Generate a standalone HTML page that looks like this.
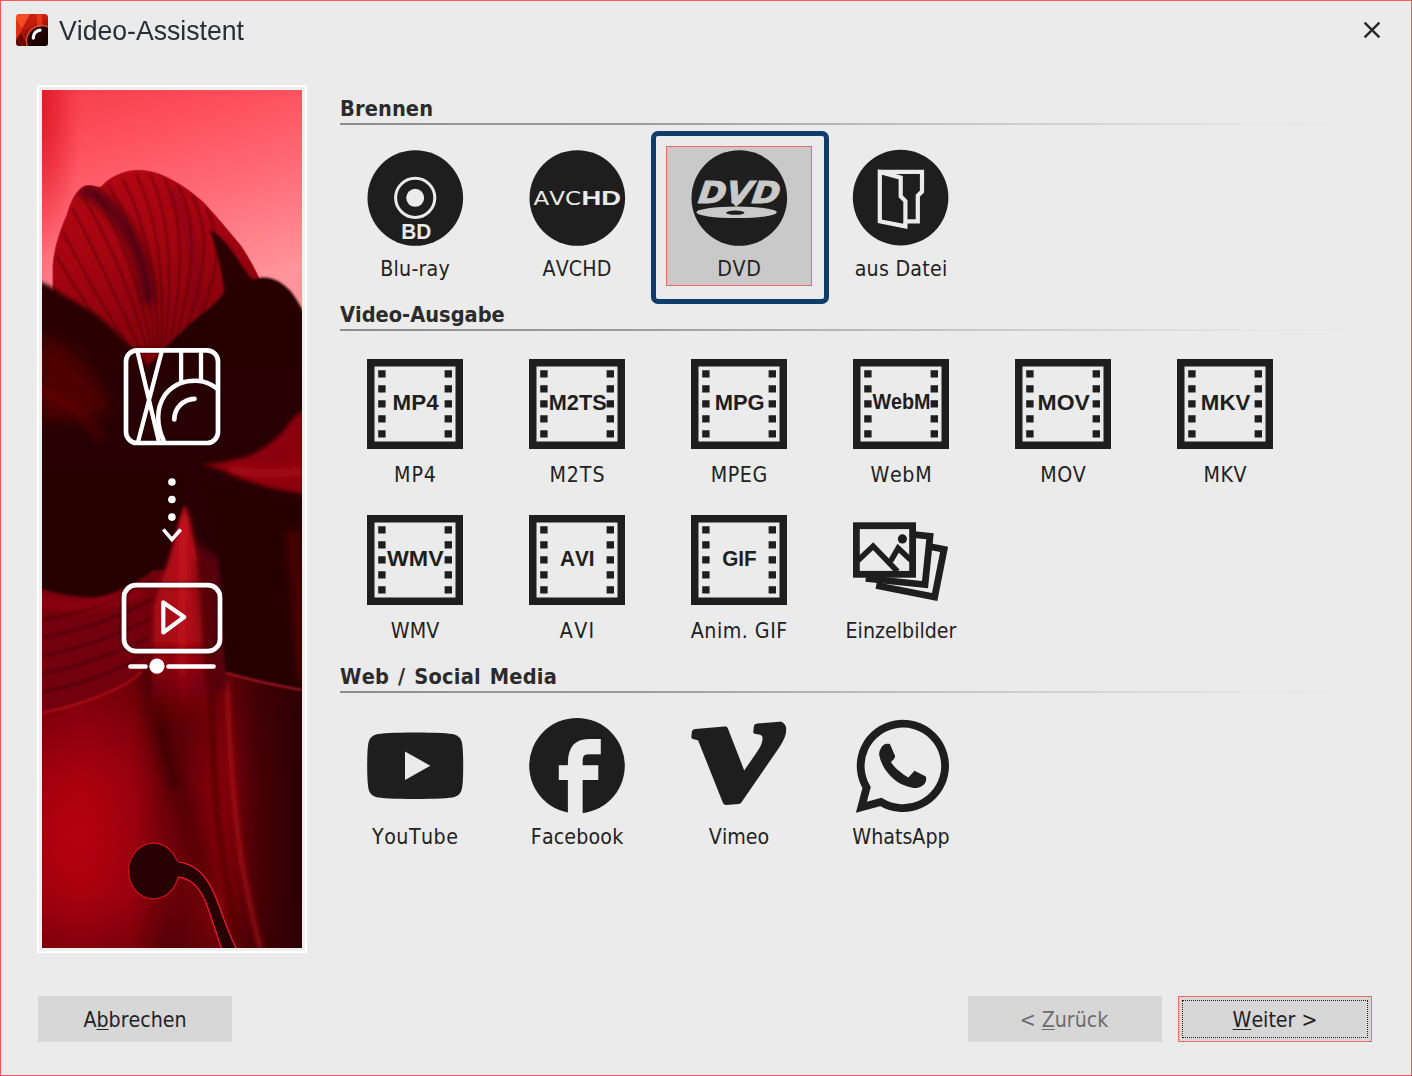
<!DOCTYPE html>
<html lang="de">
<head>
<meta charset="utf-8">
<title>Video-Assistent</title>
<style>
*{box-sizing:border-box;margin:0;padding:0}
html,body{width:1412px;height:1076px;overflow:hidden;background:#ebebeb}
body{position:relative;font-family:"DejaVu Sans Condensed","DejaVu Sans","Liberation Sans",sans-serif;color:#222;font-kerning:none;font-variant-ligatures:none}
#win{position:absolute;left:0;top:0;width:1412px;height:1076px;background:#ebebeb}
#edge{position:absolute;left:0;top:0;width:1412px;height:1076px;border:1px solid #fb5759;box-shadow:inset 0 0 0 1px #e9f0f0;pointer-events:none}
.abs{position:absolute}
#title{position:absolute;left:59px;top:13px;height:36px;line-height:36px;font-family:"Liberation Sans",sans-serif;font-size:28px;color:#2a2d33;white-space:nowrap;letter-spacing:0;transform:scaleX(.951);transform-origin:0 50%}
#frame{position:absolute;left:37px;top:85px;width:270px;height:868px;border:2px solid #fff;background:#eef0f0}
#photo{position:absolute;left:3px;top:3px;width:260px;height:858px;display:block}
h2{position:absolute;left:340px;height:26px;line-height:26px;font-size:21.6px;font-weight:bold;color:#2b2b2b;white-space:nowrap;font-family:"DejaVu Sans Condensed","DejaVu Sans","Liberation Sans",sans-serif}
.rule{position:absolute;left:340px;width:1034px;height:2px;background:linear-gradient(to right,rgba(140,140,140,1) 0%,rgba(150,150,150,.9) 30%,rgba(190,190,190,.8) 60%,rgba(225,225,225,.5) 88%,rgba(235,235,235,0) 100%)}
.lbl{position:absolute;width:162px;text-align:center;height:26px;line-height:26px;font-size:21.2px;color:#222;white-space:nowrap}
.ico{position:absolute;width:96px;height:96px;display:block;overflow:visible}
.btn{position:absolute;top:996px;width:194px;height:46px;background:#d7d7d7;text-align:center;line-height:47px;font-size:21.2px;color:#222;white-space:nowrap}
.btn u{text-decoration:underline;text-decoration-thickness:1px;text-underline-offset:2px}
#sel{position:absolute;left:651px;top:131px;width:178px;height:173px;border:5px solid #0f3d6b;border-radius:7px}
#selbox{position:absolute;left:666px;top:146px;width:146px;height:140px;background:#c9c9c9;border:1px solid #f26a6a}
</style>
</head>
<body>
<div id="win">
<!--TOP_START-->
<svg class="abs" style="left:16px;top:14px" width="32" height="32" viewBox="0 0 32 32">
<defs>
<linearGradient id="ai1" x1="0" y1="0" x2="0.35" y2="1"><stop offset="0" stop-color="#ee2c0e"/><stop offset=".45" stop-color="#c01a0a"/><stop offset="1" stop-color="#3a0301"/></linearGradient>
<linearGradient id="ai2" x1="0" y1="0" x2="1" y2="1"><stop offset="0" stop-color="#2a0300"/><stop offset="1" stop-color="#0c0000"/></linearGradient>
<clipPath id="aic"><rect width="32" height="32" rx="3.5"/></clipPath>
</defs>
<g clip-path="url(#aic)">
<rect width="32" height="32" fill="url(#ai1)"/>
<path d="M0 0L6 0L14 0L6 15L0 6Z" fill="#ff5a2c" fill-opacity=".75"/>
<path d="M0 6L6 15L0 26Z" fill="#e83818" fill-opacity=".8"/>
<path d="M6 17L14 32H4L0 28Z" fill="#c01808" fill-opacity=".8"/><path d="M0 26L6 17L0 6Z" fill="#e03014" fill-opacity=".5"/><path d="M0 27L5 19L12 32H0Z" fill="#300200" fill-opacity=".55"/>
<path d="M14 0H20L7 17L6 15Z" fill="#b82010" fill-opacity=".6"/>
<rect x="21" y="0" width="5" height="14" fill="#ff4a26" fill-opacity=".55"/>
<circle cx="26" cy="27" r="15.5" fill="none" stroke="#e8603c" stroke-width="1.4" stroke-opacity=".8"/>
<circle cx="26" cy="27" r="14.5" fill="url(#ai2)"/>
<path d="M17.300 24C17.300 19.800 20.300 16.700 24 16.200" fill="none" stroke="#fff" stroke-width="3.300" stroke-linecap="round"/>
</g>
</svg>
<svg class="abs" style="left:1360px;top:18px" width="24" height="24" viewBox="0 0 24 24"><path d="M4.600 4.700L19.400 19.400M19.400 4.700L4.600 19.400" fill="none" stroke="#2a2a2a" stroke-width="2.500"/></svg>
<!--TOP_END-->
<div id="title">Video-Assistent</div>

<div id="frame">
<!--PHOTO_START-->
<svg id="photo" width="260" height="858" viewBox="0 0 260 858">
<defs>
<linearGradient id="sky" gradientUnits="userSpaceOnUse" x1="0" y1="0" x2="70" y2="235">
<stop offset="0" stop-color="#f83c4a"/><stop offset=".3" stop-color="#fe5260"/><stop offset=".6" stop-color="#ff6c77"/><stop offset="1" stop-color="#ff949c"/>
</linearGradient>
<radialGradient id="vig" gradientUnits="userSpaceOnUse" cx="0" cy="20" r="100" gradientTransform="translate(0 20) scale(.4 1.5) translate(0 -20)">
<stop offset="0" stop-color="#de1624" stop-opacity=".9"/><stop offset=".45" stop-color="#e21c2c" stop-opacity=".55"/><stop offset="1" stop-color="#e82838" stop-opacity="0"/>
</radialGradient>
<linearGradient id="pet" gradientUnits="userSpaceOnUse" x1="60" y1="80" x2="120" y2="270">
<stop offset="0" stop-color="#b40614"/><stop offset=".45" stop-color="#a20410"/><stop offset="1" stop-color="#80020c"/>
</linearGradient>
<linearGradient id="body" gradientUnits="userSpaceOnUse" x1="0" y1="0" x2="260" y2="0">
<stop offset="0.000" stop-color="#8e000b"/><stop offset="0.154" stop-color="#9c000d"/><stop offset="0.346" stop-color="#92000c"/><stop offset="0.408" stop-color="#7a000a"/><stop offset="0.462" stop-color="#6a0008"/><stop offset="0.538" stop-color="#680008"/><stop offset="0.615" stop-color="#78000a"/><stop offset="0.685" stop-color="#88000b"/><stop offset="0.750" stop-color="#6a0008"/><stop offset="0.827" stop-color="#480005"/><stop offset="1.000" stop-color="#2a0003"/>
</linearGradient>
<linearGradient id="bodyv" gradientUnits="userSpaceOnUse" x1="0" y1="580" x2="0" y2="858"><stop offset="0" stop-color="#300003" stop-opacity=".4"/><stop offset=".4" stop-color="#300003" stop-opacity="0"/><stop offset=".8" stop-color="#300003" stop-opacity="0"/><stop offset="1" stop-color="#300003" stop-opacity=".3"/></linearGradient>
<filter id="b1" filterUnits="userSpaceOnUse" x="-40" y="-40" width="340" height="940"><feGaussianBlur stdDeviation="0.8"/></filter>
<filter id="b2" filterUnits="userSpaceOnUse" x="-40" y="-40" width="340" height="940"><feGaussianBlur stdDeviation="2"/></filter>
<filter id="b4" filterUnits="userSpaceOnUse" x="-40" y="-40" width="340" height="940"><feGaussianBlur stdDeviation="4"/></filter>
<filter id="b8" filterUnits="userSpaceOnUse" x="-40" y="-40" width="340" height="940"><feGaussianBlur stdDeviation="8"/></filter>
<clipPath id="pc"><rect x="0" y="0" width="260" height="858"/></clipPath>
<clipPath id="petclip"><path d="M11 290V176C12 160 17 143 25 125C29 111 34 100 43 96C50 94 55 98 59 97C63 92 70 87 78 84C90 79 102 79 117 84C133 90 149 101 162 113C176 128 188 143 199 156C209 171 217 187 222 200V290Z"/></clipPath>
<linearGradient id="foldg" gradientUnits="userSpaceOnUse" x1="0" y1="415" x2="0" y2="640"><stop offset="0" stop-color="#b00914"/><stop offset=".6" stop-color="#a60712"/><stop offset="1" stop-color="#900410" stop-opacity="0"/></linearGradient>
<linearGradient id="foldh" gradientUnits="userSpaceOnUse" x1="0" y1="415" x2="0" y2="620"><stop offset="0" stop-color="#d41222" stop-opacity=".7"/><stop offset=".7" stop-color="#d41222" stop-opacity=".6"/><stop offset="1" stop-color="#d41222" stop-opacity="0"/></linearGradient>
<radialGradient id="glow" gradientUnits="userSpaceOnUse" cx="30" cy="745" r="120" gradientTransform="translate(30 745) scale(1 1.35) translate(-30 -745)"><stop offset="0" stop-color="#c20010" stop-opacity=".75"/><stop offset=".35" stop-color="#b8000f" stop-opacity=".5"/><stop offset=".7" stop-color="#a8000e" stop-opacity=".2"/><stop offset="1" stop-color="#a0000d" stop-opacity="0"/></radialGradient>
</defs>
<g clip-path="url(#pc)">
<rect width="260" height="858" fill="#280003"/>
<!-- sky -->
<rect width="260" height="270" fill="url(#sky)"/>
<rect width="120" height="270" fill="url(#vig)"/>
<!-- top petal -->
<path d="M11 290V176C12 160 17 143 25 125C29 111 34 100 43 96C50 94 55 98 59 97C63 92 70 87 78 84C90 79 102 79 117 84C133 90 149 101 162 113C176 128 188 143 199 156C209 171 217 187 222 200V290Z" fill="url(#pet)" stroke="#c01528" stroke-width="1"/>
<g clip-path="url(#petclip)">
<g fill="none" stroke="#480008" stroke-opacity=".65" stroke-width="1.6" filter="url(#b1)">
<path d="M30 118C48 150 70 200 100 262"/><path d="M40 105C62 140 86 195 106 262"/><path d="M52 100C74 135 98 190 110 262"/><path d="M66 94C88 130 108 185 113 262"/><path d="M80 88C100 125 116 180 116 262"/><path d="M94 84C112 120 124 175 119 262"/><path d="M108 84C124 118 134 170 122 262"/><path d="M122 88C138 120 146 170 126 262"/><path d="M136 95C152 125 158 172 130 262"/><path d="M150 105C166 135 170 178 135 262"/><path d="M164 118C180 148 182 186 140 262"/><path d="M20 140C36 170 56 210 90 262"/><path d="M14 165C28 190 46 220 80 262"/>
</g>
<path d="M38 98C60 104 84 130 98 168C104 186 106 200 107 214" fill="none" stroke="#40020a" stroke-opacity=".75" stroke-width="15" filter="url(#b4)"/>
<path d="M168 140C180 146 190 160 200 176L218 200V260H186C186 220 182 180 168 140Z" fill="#2a0004" filter="url(#b1)"/>
<path d="M130 100C150 140 158 180 154 220" fill="none" stroke="#6a0510" stroke-opacity=".35" stroke-width="10" filter="url(#b4)"/>
</g>
<!-- left dark mass -->
<path d="M-20 188C-6 189 6 194 13 199C20 204 24 207 30 210C42 216 52 223 61 230C72 240 82 250 92 260C98 266 102 271 106 276L130 340H-20Z" fill="#2b0004" filter="url(#b2)"/>
<!-- right upper dark lobe -->
<path d="M186 196C196 196 206 190 217 188C228 186 240 191 250 203C256 211 260 219 264 226V420H100V282C112 270 130 250 148 234C162 222 178 212 186 196Z" fill="#280003" filter="url(#b1)"/>
<!-- center dark fill -->
<rect x="-5" y="281" width="270" height="267" fill="#270003"/>
<!-- left dark-red streaks -->
<path d="M-5 245C20 250 50 275 70 320C50 330 20 330 -5 330Z" fill="#580006" fill-opacity=".8" filter="url(#b8)"/>
<path d="M-5 300C20 305 40 320 60 350" fill="none" stroke="#700008" stroke-opacity=".5" stroke-width="8" filter="url(#b4)"/>
<!-- right red petal wedge -->
<path d="M160 375C170 373 176 373 182 372C192 370 200 368 208 365.500C218 361 226 355 234 348.600C240 343 244 338 247 333C252 328 256 324 262 319V404C250 402 242 401 234 399.300C224 397 216 394 208 391.500C198 388 190 384 182 381C174 378 166 376 160 375Z" fill="#8c060d" filter="url(#b2)"/>
<path d="M186 378C206 384 230 386 262 380" fill="none" stroke="#b40c16" stroke-opacity=".6" stroke-width="9" filter="url(#b4)"/>

<!-- main red body -->
<rect x="-5" y="540" width="270" height="330" fill="url(#body)"/>
<rect x="-5" y="540" width="270" height="330" fill="url(#bodyv)"/>
<rect x="0" y="560" width="200" height="298" fill="url(#glow)"/>
<!-- dark fold bands -->
<path d="M110 575C114 620 126 670 140 712C150 740 160 770 168 810" fill="none" stroke="#3c0004" stroke-opacity=".5" stroke-width="22" filter="url(#b8)"/>
<path d="M112 585C116 625 122 660 134 700" fill="none" stroke="#3a0004" stroke-opacity=".7" stroke-width="10" filter="url(#b4)"/>
<path d="M168 560C169 620 171 680 177 740C181 780 189 820 197 860" fill="none" stroke="#560006" stroke-opacity=".8" stroke-width="7" filter="url(#b2)"/>
<path d="M185 590C187 650 191 720 201 780C207 810 213 840 219 860" fill="none" stroke="#b80c18" stroke-opacity=".55" stroke-width="6" filter="url(#b2)"/>
<!-- lower-left textured petal -->
<path d="M-10 480H130L104 578C98 584 88 592 78 597C50 611 20 619 -10 625Z" fill="#72060c" filter="url(#b1)"/>
<g fill="none" stroke="#3a0004" stroke-opacity=".55" stroke-width="2.2" filter="url(#b1)">
<path d="M0 530C30 525 70 515 110 490"/><path d="M0 548C30 542 70 532 112 508"/><path d="M0 566C30 560 70 548 110 528"/><path d="M0 584C30 578 64 568 106 548"/><path d="M0 602C30 596 60 588 102 566"/>
</g>
<path d="M-5 510C30 520 60 516 100 500" fill="none" stroke="#b00c16" stroke-opacity=".5" stroke-width="10" filter="url(#b4)"/>
<path d="M0 623C20 619 50 611 78 597C88 592 94 588 99 582" fill="none" stroke="#e01828" stroke-opacity=".7" stroke-width="1.5" filter="url(#b1)"/>
<!-- center fold -->
<path d="M150 450L180 470L186 600L150 600Z" fill="#560007" filter="url(#b4)"/>
<path d="M141 415C137 432 132 450 127 468C122 484 116 500 112 516L108 640H168C164 590 160 520 158 490C156 464 150 440 144 417Z" fill="url(#foldg)" filter="url(#b2)"/>
<path d="M142 425C141 460 140 520 140 620" fill="none" stroke="url(#foldh)" stroke-width="8" filter="url(#b4)"/>
<path d="M158 470C162 510 166 550 168 600" fill="none" stroke="#5a0007" stroke-opacity=".7" stroke-width="10" filter="url(#b4)"/>
<!-- right dark lobe lower -->
<path d="M150 384C190 396 226 405 264 412V601C240 596 210 590 184 583C182 575 181 550 181 520C180 470 170 420 150 384Z" fill="#260003" filter="url(#b1)"/>
<path d="M250 440C254 480 258 540 262 590" fill="none" stroke="#5a0008" stroke-opacity=".7" stroke-width="12" filter="url(#b4)"/>
<path d="M184 583C210 590 236 596 260 600" fill="none" stroke="#f02838" stroke-opacity=".8" stroke-width="1.6" filter="url(#b1)"/>
<!-- left dark lobe mid -->
<path d="M-10 380H150C146 400 142 412 140 418C134 436 128 456 120 470C112 480 104 486 96 491C80 500 66 505 55 507C36 508 16 504 -10 496Z" fill="#270003" filter="url(#b1)"/>
<!-- stamen -->
<path d="M131 772C140 771 152 775 161 785C170 796 175 810 180 824C185 838 190 850 195 860H180C176 848 172 836 168 824C164 811 160 801 152 794C146 789 140 787 134 787Z" fill="#260002" stroke="#e8182c" stroke-width="1.300"/>
<ellipse cx="111.500" cy="781" rx="25" ry="27.800" fill="#260002" stroke="#d01020" stroke-width="1.200"/>
<path d="M130 769L137 772.500V786L130 791Z" fill="#260002"/>
</g>
<!--WHITE_START-->
<g fill="none" stroke="#fff" stroke-width="4.7" stroke-linecap="round" stroke-linejoin="round">
<g stroke="#1a0002" stroke-opacity=".35" stroke-width="7" filter="url(#b1)">
<rect x="84" y="260.4" width="92" height="92.6" rx="11"/>
<rect x="82" y="495.2" width="96" height="66" rx="12"/>
</g>
<!-- app logo -->
<rect x="84" y="260.4" width="92" height="92.6" rx="11"/>
<path d="M95.6 262L117 352M119.6 262L96 352" stroke-width="4.3"/><path d="M139.1 262V292M159 262V290.500" stroke-linecap="butt" stroke-width="4.300"/>
<path d="M121.800 351C118 343 116.200 335 116.200 327C116.200 319 118.500 311.500 122.800 305.200C127 299.500 132.500 295.500 138.500 293.100C143 291.300 148 290.700 153 290.700C158.500 290.700 164 292 168.700 294.400C171 295.600 172.800 296.800 174.500 298.200" stroke-width="4.500"/>
<path d="M132.300 329.500C132.300 318.500 141 309.200 152.500 308.800"/>
<!-- dots + chevron -->
<g fill="#fff" stroke="none"><circle cx="129.900" cy="392" r="3.800"/><circle cx="129.900" cy="409.500" r="3.800"/><circle cx="129.900" cy="427.100" r="3.800"/></g>
<path d="M122.500 440.800L129.900 449.500L137.500 440.800" stroke-width="3.600" stroke-linecap="square" stroke-linejoin="miter"/>
<!-- player -->
<rect x="82" y="495.200" width="96" height="66" rx="12"/>
<path d="M121.300 512.500V542.500L142.200 527Z" stroke-width="4.200"/>
<path d="M88.500 576.500H103.500M126.500 576.500H171.500"/>
<circle cx="114.900" cy="576.200" r="7.600" fill="#fff" stroke="none"/>
</g>
<!--WHITE_END-->
</svg>
<!--PHOTO_END-->
</div>

<h2 style="top:96px;letter-spacing:.12px">Brennen</h2>
<div class="rule" style="top:123px"></div>
<div id="sel"></div><div id="selbox"></div>
<!--ICONS_START-->
<svg id="icons" class="abs" style="left:0;top:0" width="1412" height="1076" viewBox="0 0 1412 1076">
<g fill="#1e1e1e" font-family="'Liberation Sans',sans-serif" font-weight="bold">
<!-- Blu-ray -->
<circle cx="415.3" cy="198" r="47.8"/>
<circle cx="415.2" cy="197.8" r="19.6" fill="none" stroke="#ebebeb" stroke-width="3"/>
<circle cx="415.2" cy="197.8" r="9" fill="#ebebeb"/>
<text x="416.2" y="239.4" text-anchor="middle" font-size="22" fill="#ebebeb" textLength="30" lengthAdjust="spacingAndGlyphs">BD</text>
<!-- AVCHD -->
<circle cx="577.3" cy="198" r="47.8"/>
<text y="205.3" fill="#ebebeb"><tspan x="533.5" font-family="'DejaVu Sans','Liberation Sans',sans-serif" font-weight="normal" font-size="19.5" textLength="47.5" lengthAdjust="spacingAndGlyphs">AVC</tspan><tspan x="581.6" font-size="20.6" textLength="39.5" lengthAdjust="spacingAndGlyphs">HD</tspan></text>
<!-- DVD -->
<circle cx="739.3" cy="198" r="47.8"/>
<text x="0" y="0" transform="translate(697.600 202.800) skewX(-7)" font-family="'DejaVu Sans','Liberation Sans',sans-serif" font-style="italic" font-size="30" fill="#c9c9c9" stroke="#c9c9c9" stroke-width="1.100" stroke-linejoin="miter" textLength="81.500" lengthAdjust="spacingAndGlyphs">DVD</text>
<path d="M731 201L736 206.800L742.500 201Z" fill="#c9c9c9"/>
<ellipse cx="736.6" cy="212.3" rx="40.2" ry="5.8" fill="#c9c9c9"/>
<ellipse cx="735.3" cy="212.7" rx="9.2" ry="2.1"/>
<!-- aus Datei -->
<circle cx="900.6" cy="197.6" r="47.8"/>
<g fill="none" stroke="#ebebeb" stroke-width="4.2" stroke-linejoin="miter">
<path d="M879.8 171.9H922V191.6L917.8 195.7V221.3H905.4"/>
<path d="M879.8 171.9L900.7 177.6V196.3L905.4 201.1V226.4L879.8 221.3Z"/>
</g>
<!-- film icons -->
<g transform="translate(367 359)"><path fill-rule="evenodd" d="M0 0H96V90H0ZM7.5 7.5V82.5H88.5V7.5Z"/><path d="M11.2 11.2h7.4v7.2h-7.4zM11.2 26.2h7.4v7.2h-7.4zM11.2 41.2h7.4v7.2h-7.4zM11.2 56.2h7.4v7.2h-7.4zM11.2 71.2h7.4v7.2h-7.4zM77.6 11.2h7.4v7.2h-7.4zM77.6 26.2h7.4v7.2h-7.4zM77.6 41.2h7.4v7.2h-7.4zM77.6 56.2h7.4v7.2h-7.4zM77.6 71.2h7.4v7.2h-7.4z"/></g><text x="415.6" y="410.3" text-anchor="middle" font-size="22.6" textLength="46" lengthAdjust="spacingAndGlyphs">MP4</text>
<g transform="translate(529 359)"><path fill-rule="evenodd" d="M0 0H96V90H0ZM7.5 7.5V82.5H88.5V7.5Z"/><path d="M11.2 11.2h7.4v7.2h-7.4zM11.2 26.2h7.4v7.2h-7.4zM11.2 41.2h7.4v7.2h-7.4zM11.2 56.2h7.4v7.2h-7.4zM11.2 71.2h7.4v7.2h-7.4zM77.6 11.2h7.4v7.2h-7.4zM77.6 26.2h7.4v7.2h-7.4zM77.6 41.2h7.4v7.2h-7.4zM77.6 56.2h7.4v7.2h-7.4zM77.6 71.2h7.4v7.2h-7.4z"/></g><text x="577.7" y="410.3" text-anchor="middle" font-size="22.6" textLength="57.8" lengthAdjust="spacingAndGlyphs">M2TS</text>
<g transform="translate(691 359)"><path fill-rule="evenodd" d="M0 0H96V90H0ZM7.5 7.5V82.5H88.5V7.5Z"/><path d="M11.2 11.2h7.4v7.2h-7.4zM11.2 26.2h7.4v7.2h-7.4zM11.2 41.2h7.4v7.2h-7.4zM11.2 56.2h7.4v7.2h-7.4zM11.2 71.2h7.4v7.2h-7.4zM77.6 11.2h7.4v7.2h-7.4zM77.6 26.2h7.4v7.2h-7.4zM77.6 41.2h7.4v7.2h-7.4zM77.6 56.2h7.4v7.2h-7.4zM77.6 71.2h7.4v7.2h-7.4z"/></g><text x="739.7" y="410.3" text-anchor="middle" font-size="22.6" textLength="50" lengthAdjust="spacingAndGlyphs">MPG</text>
<g transform="translate(853 359)"><path fill-rule="evenodd" d="M0 0H96V90H0ZM7.5 7.5V82.5H88.5V7.5Z"/><path d="M11.2 11.2h7.4v7.2h-7.4zM11.2 26.2h7.4v7.2h-7.4zM11.2 41.2h7.4v7.2h-7.4zM11.2 56.2h7.4v7.2h-7.4zM11.2 71.2h7.4v7.2h-7.4zM77.6 11.2h7.4v7.2h-7.4zM77.6 26.2h7.4v7.2h-7.4zM77.6 41.2h7.4v7.2h-7.4zM77.6 56.2h7.4v7.2h-7.4zM77.6 71.2h7.4v7.2h-7.4z"/></g><text x="901.5" y="409.4" text-anchor="middle" font-size="21.2" textLength="58.2" lengthAdjust="spacingAndGlyphs">WebM</text>
<g transform="translate(1015 359)"><path fill-rule="evenodd" d="M0 0H96V90H0ZM7.5 7.5V82.5H88.5V7.5Z"/><path d="M11.2 11.2h7.4v7.2h-7.4zM11.2 26.2h7.4v7.2h-7.4zM11.2 41.2h7.4v7.2h-7.4zM11.2 56.2h7.4v7.2h-7.4zM11.2 71.2h7.4v7.2h-7.4zM77.6 11.2h7.4v7.2h-7.4zM77.6 26.2h7.4v7.2h-7.4zM77.6 41.2h7.4v7.2h-7.4zM77.6 56.2h7.4v7.2h-7.4zM77.6 71.2h7.4v7.2h-7.4z"/></g><text x="1063.7" y="410.3" text-anchor="middle" font-size="22.6" textLength="52.2" lengthAdjust="spacingAndGlyphs">MOV</text>
<g transform="translate(1177 359)"><path fill-rule="evenodd" d="M0 0H96V90H0ZM7.5 7.5V82.5H88.5V7.5Z"/><path d="M11.2 11.2h7.4v7.2h-7.4zM11.2 26.2h7.4v7.2h-7.4zM11.2 41.2h7.4v7.2h-7.4zM11.2 56.2h7.4v7.2h-7.4zM11.2 71.2h7.4v7.2h-7.4zM77.6 11.2h7.4v7.2h-7.4zM77.6 26.2h7.4v7.2h-7.4zM77.6 41.2h7.4v7.2h-7.4zM77.6 56.2h7.4v7.2h-7.4zM77.6 71.2h7.4v7.2h-7.4z"/></g><text x="1225.6" y="410.3" text-anchor="middle" font-size="22.6" textLength="49.5" lengthAdjust="spacingAndGlyphs">MKV</text>
<g transform="translate(367 515)"><path fill-rule="evenodd" d="M0 0H96V90H0ZM7.5 7.5V82.5H88.5V7.5Z"/><path d="M11.2 11.2h7.4v7.2h-7.4zM11.2 26.2h7.4v7.2h-7.4zM11.2 41.2h7.4v7.2h-7.4zM11.2 56.2h7.4v7.2h-7.4zM11.2 71.2h7.4v7.2h-7.4zM77.6 11.2h7.4v7.2h-7.4zM77.6 26.2h7.4v7.2h-7.4zM77.6 41.2h7.4v7.2h-7.4zM77.6 56.2h7.4v7.2h-7.4zM77.6 71.2h7.4v7.2h-7.4z"/></g><text x="415.3" y="566.3" text-anchor="middle" font-size="22.6" textLength="56.7" lengthAdjust="spacingAndGlyphs">WMV</text>
<g transform="translate(529 515)"><path fill-rule="evenodd" d="M0 0H96V90H0ZM7.5 7.5V82.5H88.5V7.5Z"/><path d="M11.2 11.2h7.4v7.2h-7.4zM11.2 26.2h7.4v7.2h-7.4zM11.2 41.2h7.4v7.2h-7.4zM11.2 56.2h7.4v7.2h-7.4zM11.2 71.2h7.4v7.2h-7.4zM77.6 11.2h7.4v7.2h-7.4zM77.6 26.2h7.4v7.2h-7.4zM77.6 41.2h7.4v7.2h-7.4zM77.6 56.2h7.4v7.2h-7.4zM77.6 71.2h7.4v7.2h-7.4z"/></g><text x="577.3" y="566.3" text-anchor="middle" font-size="22.6" textLength="34.6" lengthAdjust="spacingAndGlyphs">AVI</text>
<g transform="translate(691 515)"><path fill-rule="evenodd" d="M0 0H96V90H0ZM7.5 7.5V82.5H88.5V7.5Z"/><path d="M11.2 11.2h7.4v7.2h-7.4zM11.2 26.2h7.4v7.2h-7.4zM11.2 41.2h7.4v7.2h-7.4zM11.2 56.2h7.4v7.2h-7.4zM11.2 71.2h7.4v7.2h-7.4zM77.6 11.2h7.4v7.2h-7.4zM77.6 26.2h7.4v7.2h-7.4zM77.6 41.2h7.4v7.2h-7.4zM77.6 56.2h7.4v7.2h-7.4zM77.6 71.2h7.4v7.2h-7.4z"/></g><text x="739.5" y="566.3" text-anchor="middle" font-size="22.6" textLength="34.5" lengthAdjust="spacingAndGlyphs">GIF</text>
<!-- Einzelbilder -->
<g stroke="#1e1e1e" stroke-width="6.8" fill="#ebebeb">
<rect x="-28.1" y="-24.3" width="56.2" height="48.6" transform="translate(911.8 567.7) rotate(11.2)"/>
<rect x="-28.1" y="-24.3" width="56.2" height="48.6" transform="translate(899.55 557.55) rotate(5.9)"/>
<rect x="856.4" y="525.7" width="56.2" height="48.6"/>
</g>
<circle cx="902.4" cy="538.9" r="4.6"/>
<path d="M858 560.5L873.1 546.1L897.5 571.5M890.800 560.800L898.1 548.3L911 560.3" fill="none" stroke="#1e1e1e" stroke-width="5.6"/>
<!-- YouTube -->
<path d="M415.2 732.4C436 732.4 450 733.2 454.5 734.4C458.6 735.5 461 738.4 461.9 742.6C462.9 747.5 463.2 756 463.2 765.7C463.2 775.4 462.9 783.9 461.9 788.8C461 793 458.6 795.9 454.5 797C450 798.2 436 799 415.2 799C394.4 799 380.4 798.2 375.9 797C371.8 795.9 369.4 793 368.5 788.8C367.5 783.9 367.2 775.4 367.2 765.7C367.2 756 367.5 747.5 368.5 742.6C369.4 738.4 371.8 735.5 375.9 734.4C380.4 733.2 394.4 732.4 415.2 732.4Z"/>
<path d="M405 751.6L430.3 765.7L405 780Z" fill="#ebebeb"/>
<!-- Facebook -->
<clipPath id="fbc"><circle cx="577" cy="765.7" r="49"/></clipPath>
<circle cx="577" cy="765.7" r="47.8"/>
<g clip-path="url(#fbc)"><text x="100" y="400" transform="translate(532.5 713.2) scale(.264 .31)" font-family="'DejaVu Sans','Liberation Sans',sans-serif" font-weight="normal" font-size="400" fill="#ebebeb" stroke="#ebebeb" stroke-width="19.5" stroke-linejoin="miter">f</text></g>
<!-- Vimeo -->
<text x="100" y="400" transform="rotate(-5 738.7 765) translate(645.9 643.6) scale(.498 .39)" font-family="'Liberation Serif',serif" font-style="italic" font-weight="bold" font-size="400" stroke="#1e1e1e" stroke-width="14" stroke-linejoin="round">v</text>
<!-- WhatsApp -->
<path d="M861.400 807.200L866.600 787.500A42.200 42.200 0 1 1 880.800 801.900Z" fill="none" stroke="#1e1e1e" stroke-width="7.800" stroke-linejoin="miter" stroke-miterlimit="6"/>
<path d="M883.8 744.8C885.500 743.800 888.500 743.600 890 744.200L895.100 756C895.100 758.500 892.500 760.500 891 762.100C893 765.500 895.500 768 898.200 770.300C901.500 773.200 905 775.800 908.400 777.500L914.500 770.800L925.800 776.400C926.300 778 926.300 780 925.800 781.600C924.800 784 923 786 920.600 786.700C918.500 787.800 916 788.100 913.500 787.900C909.500 787.300 905.500 786.200 902.200 784.600C898 782.500 894 779.500 891 776.400C887.500 773 884.800 769.300 882.800 765.200C881 762 879.800 758.500 879.200 755C879 753 879.500 751 880.300 749.400C881.200 747.500 882.300 746 883.800 744.800Z"/>
</g>
</svg>
<!--ICONS_END-->
<div class="lbl" style="left:334px;top:256px;letter-spacing:0.25px;text-indent:0.25px">Blu-ray</div>
<div class="lbl" style="left:496px;top:256px;letter-spacing:0.15px;text-indent:0.15px">AVCHD</div>
<div class="lbl" style="left:658px;top:256px;letter-spacing:0.65px;text-indent:0.65px">DVD</div>
<div class="lbl" style="left:820px;top:256px;letter-spacing:0.25px;text-indent:0.25px">aus Datei</div>

<h2 style="top:302px">Video-Ausgabe</h2>
<div class="rule" style="top:329px"></div>
<!--ROW2-->
<div class="lbl" style="left:334px;top:462px;letter-spacing:0.9px;text-indent:0.9px">MP4</div>
<div class="lbl" style="left:496px;top:462px;letter-spacing:0.9px;text-indent:0.9px">M2TS</div>
<div class="lbl" style="left:658px;top:462px;letter-spacing:0.6px;text-indent:0.6px">MPEG</div>
<div class="lbl" style="left:820px;top:462px;letter-spacing:0.7px;text-indent:0.7px">WebM</div>
<div class="lbl" style="left:982px;top:462px;letter-spacing:0.5px;text-indent:0.5px">MOV</div>
<div class="lbl" style="left:1144px;top:462px;letter-spacing:0.5px;text-indent:0.5px">MKV</div>
<!--ROW3-->
<div class="lbl" style="left:334px;top:618px">WMV</div>
<div class="lbl" style="left:496px;top:618px;letter-spacing:1.4px;text-indent:1.4px">AVI</div>
<div class="lbl" style="left:658px;top:618px;letter-spacing:0.5px;text-indent:0.5px">Anim. GIF</div>
<div class="lbl" style="left:820px;top:618px">Einzelbilder</div>

<h2 style="top:664px;word-spacing:2px;letter-spacing:.2px">Web / Social Media</h2>
<div class="rule" style="top:691px"></div>
<!--ROW4-->
<div class="lbl" style="left:334px;top:824px;letter-spacing:0.5px;text-indent:0.5px">YouTube</div>
<div class="lbl" style="left:496px;top:824px;letter-spacing:0.15px;text-indent:0.15px">Facebook</div>
<div class="lbl" style="left:658px;top:824px">Vimeo</div>
<div class="lbl" style="left:820px;top:824px">WhatsApp</div>

<div class="btn" style="left:968px;background:#d7d7d7"></div>
<div class="btn" style="left:38px">A<u>b</u>brechen</div>
<div class="btn" style="left:967px;color:#6d6d6d;background:none">&lt; <u>Z</u>urück</div>
<div class="btn" id="next" style="left:1178px;border:1px solid #f26a6a;line-height:45px"><u>W</u>eiter &gt;<span class="abs" style="left:3px;top:3px;right:3px;bottom:3px;border:1px dotted #222"></span></div>
<div id="edge"></div>
</div>
</body>
</html>
